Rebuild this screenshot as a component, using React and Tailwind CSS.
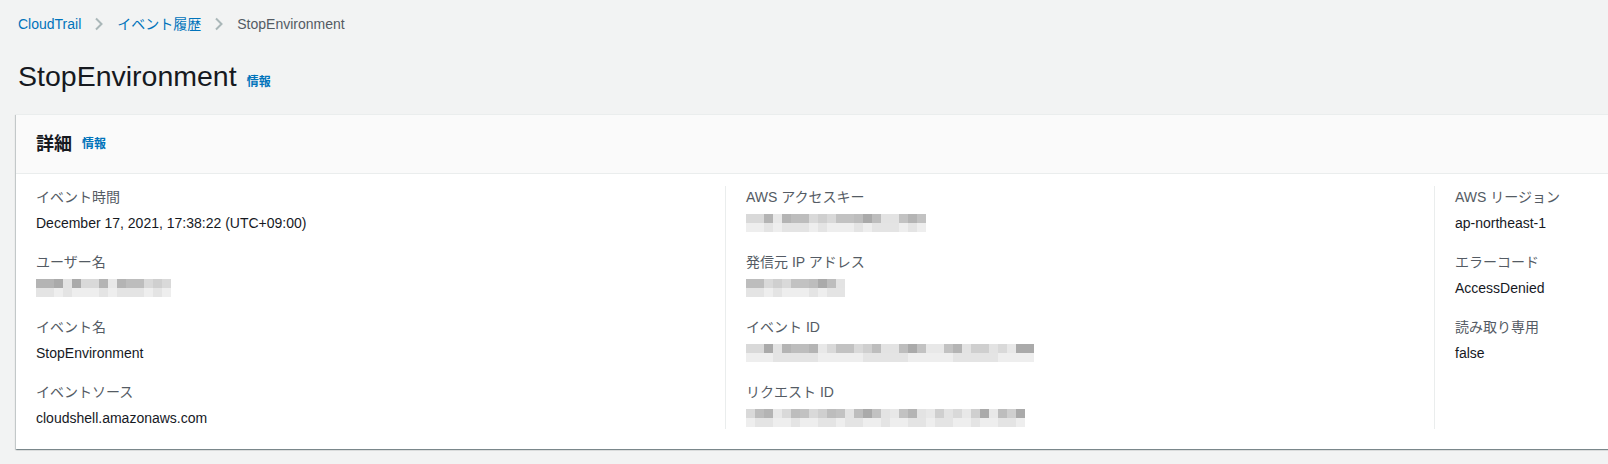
const shades = ["#b4b4b4", "#c2c2c2", "#cfcfcf", "#d9d9d9", "#e3e3e3", "#aaaaaa", "#bdbdbd", "#e8e8e8"];

function Redacted({ width, seed, rows = 2 }) {
  const cols = Math.ceil(width / 9);
  const cells = [];
  for (let r = 0; r < rows; r++) {
    for (let c = 0; c < cols; c++) {
      const n = (seed * 31 + r * 17 + c * 7 + ((c * c + seed) % 5)) % shades.length;
      const lighten = r === rows - 1 || (rows === 3 && r === 0);
      cells.push(
        <span
          key={`${r}-${c}`}
          className="block h-[9px] w-[9px]"
          style={{ backgroundColor: lighten ? (n % 2 ? "#e4e4e4" : "#eeeeee") : shades[n] }}
        />
      );
    }
  }
  return (
    <div className="mt-[4px] flex flex-wrap py-[2px]" style={{ width: cols * 9 }}>
      {cells}
    </div>
  );
}

function Chevron() {
  return (
    <svg className="mx-[13px]" width="10" height="14" viewBox="0 0 10 14" fill="none">
      <path d="M2 1.5 7.5 7 2 12.5" stroke="#aab7b8" strokeWidth="2" />
    </svg>
  );
}

const columns = [
  [
    { label: "イベント時間", value: "December 17, 2021, 17:38:22 (UTC+09:00)" },
    { label: "ユーザー名", redacted: { width: 135, seed: 3 } },
    { label: "イベント名", value: "StopEnvironment" },
    { label: "イベントソース", value: "cloudshell.amazonaws.com" },
  ],
  [
    { label: "AWS アクセスキー", redacted: { width: 176, seed: 7 } },
    { label: "発信元 IP アドレス", redacted: { width: 96, seed: 11 } },
    { label: "イベント ID", redacted: { width: 280, seed: 5 } },
    { label: "リクエスト ID", redacted: { width: 276, seed: 9 } },
  ],
  [
    { label: "AWS リージョン", value: "ap-northeast-1" },
    { label: "エラーコード", value: "AccessDenied" },
    { label: "読み取り専用", value: "false" },
  ],
];

function Field({ item }) {
  return (
    <div>
      <div className="text-sm leading-[22px] text-[#545b64]">{item.label}</div>
      {item.redacted ? (
        <Redacted width={item.redacted.width} seed={item.redacted.seed} />
      ) : (
        <div className="mt-[4px] text-sm leading-[22px] text-[#16191f]">{item.value}</div>
      )}
    </div>
  );
}

export default function App() {
  return (
    <div className="min-h-[464px] overflow-hidden bg-[#f2f3f3] font-['Liberation_Sans','Noto_Sans_CJK_JP',sans-serif] text-[#16191f]">
      <nav className="flex items-center pl-[18px] pt-[13px] text-sm leading-[22px]">
        <a className="text-[#0073bb]" href="#">CloudTrail</a>
        <Chevron />
        <a className="text-[#0073bb]" href="#">イベント履歴</a>
        <Chevron />
        <span className="text-[#545b64]">StopEnvironment</span>
      </nav>

      <div className="mt-[23px] flex items-baseline pl-[18px]">
        <h1 className="text-[28.5px] leading-[36px] text-[#16191f]">StopEnvironment</h1>
        <a className="ml-[10px] text-xs font-bold text-[#0073bb]" href="#">情報</a>
      </div>

      <section className="ml-[16px] mt-[20px] w-[2200px] border-t border-[#eaeded] bg-white shadow-[0_1px_1px_0_rgba(0,28,36,0.3),1px_1px_1px_0_rgba(0,28,36,0.15),-1px_1px_1px_0_rgba(0,28,36,0.15)]">
        <header className="flex h-[59px] items-center border-b border-[#eaeded] bg-[#fafafa] px-[20px]">
          <h2 className="text-lg font-bold leading-[22px]">詳細</h2>
          <a className="ml-[10px] text-xs font-bold text-[#0073bb]" href="#">情報</a>
        </header>

        <div className="grid grid-cols-[709px_709px_709px] pb-[20px] pt-[12px]">
          {columns.map((col, i) => (
            <div
              key={i}
              className={`flex flex-col gap-[17px] pl-[20px] ${i > 0 ? "border-l border-[#eaeded]" : ""}`}
            >
              {col.map((item) => (
                <Field key={item.label} item={item} />
              ))}
            </div>
          ))}
        </div>
      </section>
    </div>
  );
}
